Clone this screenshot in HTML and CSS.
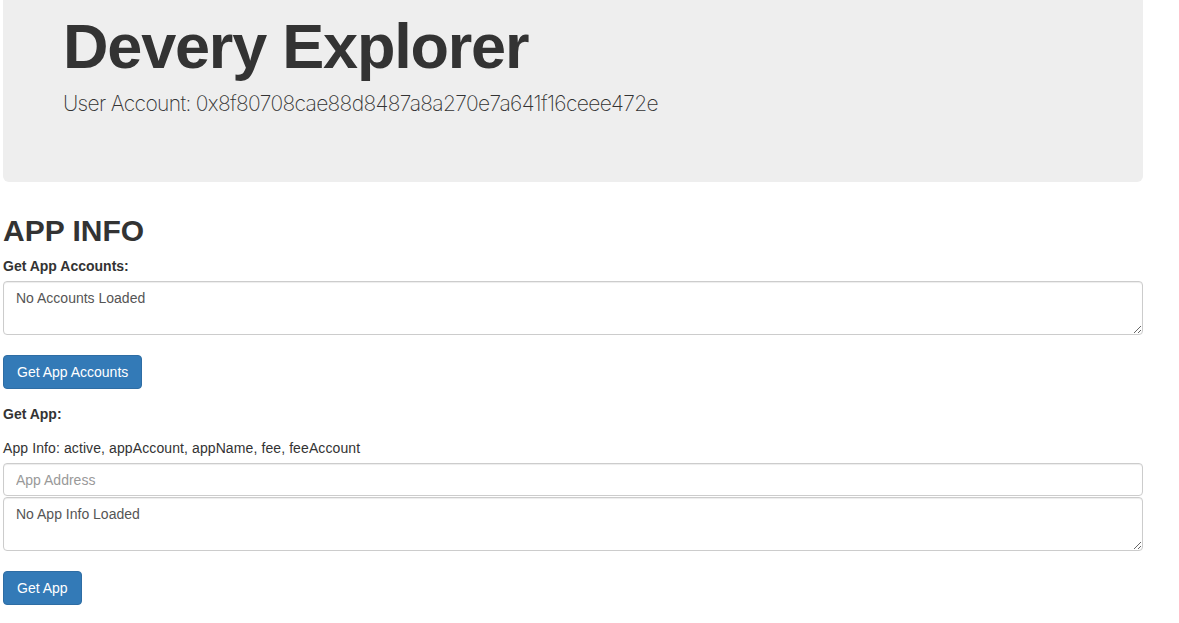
FILE: index.html
```html
<!DOCTYPE html>
<html lang="en">
<head>
<meta charset="utf-8">
<title>Devery Explorer</title>
<link rel="stylesheet" href="styles.css">
</head>
<body>
<div class="container">
  <div class="jumbotron">
    <h1 class="title">Devery Explorer</h1>
    <p class="account">User Account: 0x8f80708cae88d8487a8a270e7a641f16ceee472e</p>
  </div>

  <h2 class="section-title">APP INFO</h2>

  <div class="form-group">
    <label class="field-label">Get App Accounts:</label>
    <textarea class="form-control area" rows="2">No Accounts Loaded</textarea>
  </div>
  <button class="btn btn-primary">Get App Accounts</button>

  <div class="form-group second">
    <label class="field-label block">Get App:</label>
    <p class="help">App Info: active, appAccount, appName, fee, feeAccount</p>
    <input class="form-control input" type="text" placeholder="App Address">
    <textarea class="form-control area" rows="2">No App Info Loaded</textarea>
  </div>
  <button class="btn btn-primary">Get App</button>
</div>
</body>
</html>
```

FILE: styles.css
```css
html, body {
  margin: 0;
  padding: 0;
  background: #fff;
}

body {
  font-family: "Liberation Sans", Arial, Helvetica, sans-serif;
  font-size: 14px;
  line-height: 20px;
  color: #333;
}

.container {
  width: 1140px;
  margin-left: 3px;
}

.jumbotron {
  background: #eee;
  border-radius: 0 0 6px 6px;
  padding: 12px 60px 48px;
}

.title {
  margin: 0 0 8px;
  font-size: 63px;
  line-height: 1.1;
  font-weight: bold;
  color: #333;
  letter-spacing: -1.2px;
}

.account {
  margin: 0 0 15px;
  font-family: Inter, "Liberation Sans", Arial, sans-serif;
  font-size: 21px;
  line-height: 30px;
  font-weight: 200;
  letter-spacing: -0.65px;
  color: #333;
}

.section-title {
  margin: 32px 0 9px;
  font-size: 30px;
  line-height: 33px;
  font-weight: bold;
  color: #333;
}

.form-group {
  display: flex;
  flex-direction: column;
  align-items: flex-start;
}

.field-label {
  font-weight: bold;
  margin-bottom: 5px;
}

.field-label.block {
  margin-bottom: 14px;
}

.second {
  margin-top: 15px;
}

.help {
  margin: 0 0 5px;
  letter-spacing: 0.1px;
}

.form-control {
  box-sizing: border-box;
  width: 100%;
  font-family: "Liberation Sans", Arial, Helvetica, sans-serif;
  font-size: 14px;
  line-height: 20px;
  color: #555;
  background: #fff;
  border: 1px solid #ccc;
  border-radius: 4px;
  box-shadow: inset 0 1px 1px rgba(0, 0, 0, 0.075);
  padding: 6px 12px;
  margin: 0;
}

.input {
  height: 33px;
  margin-bottom: 1px;
}

.input::placeholder {
  color: #999;
}

.area {
  height: 54px;
  resize: vertical;
  margin-bottom: 20px;
}

.btn {
  display: block;
  box-sizing: border-box;
  height: 34px;
  padding: 6px 13px;
  font-family: "Liberation Sans", Arial, Helvetica, sans-serif;
  font-size: 14px;
  line-height: 20px;
  border: 1px solid transparent;
  border-radius: 4px;
  cursor: pointer;
}

.btn-primary {
  color: #fff;
  background: #337ab7;
  border-color: #2e6da4;
}
```
